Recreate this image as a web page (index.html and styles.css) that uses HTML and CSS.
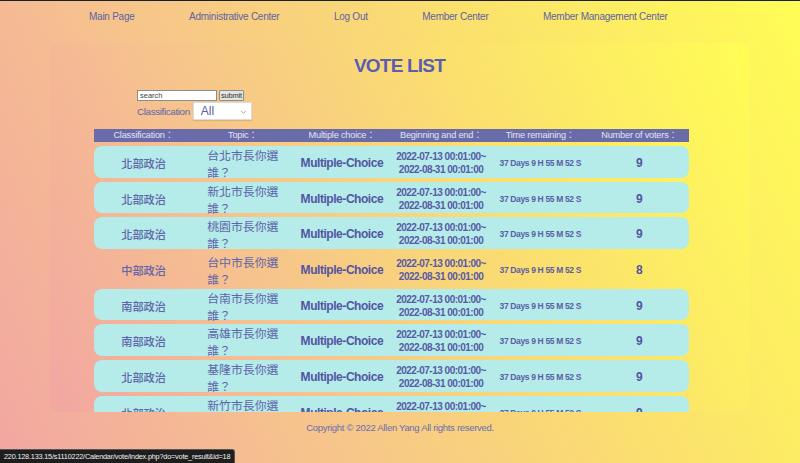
FILE: index.html
```html
<!DOCTYPE html>
<html lang="zh-Hant">
<head>
<meta charset="utf-8">
<title>VOTE LIST</title>
<link rel="stylesheet" href="styles.css">
</head>
<body>
<nav class="nav">
  <a href="#">Main Page</a>
  <a href="#">Administrative Center</a>
  <a href="#">Log Out</a>
  <a href="#">Member Center</a>
  <a href="#">Member Management Center</a>
</nav>
<main class="panel">
  <h1 class="title">VOTE LIST</h1>
  <form class="filters">
    <div class="search-row">
      <input class="search" type="text" value="search">
      <button class="submit" type="button">submit</button>
    </div>
    <div class="class-row">
      <span class="class-label">Classification</span>
      <div class="select">All
        <svg class="chev" viewBox="0 0 10 6" width="7" height="4"><path d="M1 1l4 4 4-4" fill="none" stroke="#9a9a9a" stroke-width="1.2"/></svg>
      </div>
    </div>
  </form>
  <div class="table">
    <div class="thead">
      <span>Classification：</span>
      <span>Topic：</span>
      <span>Multiple choice：</span>
      <span>Beginning and end：</span>
      <span>Time remaining：</span>
      <span>Number of voters：</span>
    </div>
    <div class="rows">
      <div class="row"><span class="c-class">北部政治</span><span class="c-topic">台北市長你選誰？</span><span class="c-multi">Multiple-Choice</span><span class="c-date">2022-07-13 00:01:00~<br>2022-08-31 00:01:00</span><span class="c-time">37 Days 9 H 55 M 52 S</span><span class="c-num">9</span></div>
      <div class="row"><span class="c-class">北部政治</span><span class="c-topic">新北市長你選誰？</span><span class="c-multi">Multiple-Choice</span><span class="c-date">2022-07-13 00:01:00~<br>2022-08-31 00:01:00</span><span class="c-time">37 Days 9 H 55 M 52 S</span><span class="c-num">9</span></div>
      <div class="row"><span class="c-class">北部政治</span><span class="c-topic">桃園市長你選誰？</span><span class="c-multi">Multiple-Choice</span><span class="c-date">2022-07-13 00:01:00~<br>2022-08-31 00:01:00</span><span class="c-time">37 Days 9 H 55 M 52 S</span><span class="c-num">9</span></div>
      <div class="row row-hover"><span class="c-class">中部政治</span><span class="c-topic">台中市長你選誰？</span><span class="c-multi">Multiple-Choice</span><span class="c-date">2022-07-13 00:01:00~<br>2022-08-31 00:01:00</span><span class="c-time">37 Days 9 H 55 M 52 S</span><span class="c-num">8</span></div>
      <div class="row"><span class="c-class">南部政治</span><span class="c-topic">台南市長你選誰？</span><span class="c-multi">Multiple-Choice</span><span class="c-date">2022-07-13 00:01:00~<br>2022-08-31 00:01:00</span><span class="c-time">37 Days 9 H 55 M 52 S</span><span class="c-num">9</span></div>
      <div class="row"><span class="c-class">南部政治</span><span class="c-topic">高雄市長你選誰？</span><span class="c-multi">Multiple-Choice</span><span class="c-date">2022-07-13 00:01:00~<br>2022-08-31 00:01:00</span><span class="c-time">37 Days 9 H 55 M 52 S</span><span class="c-num">9</span></div>
      <div class="row"><span class="c-class">北部政治</span><span class="c-topic">基隆市長你選誰？</span><span class="c-multi">Multiple-Choice</span><span class="c-date">2022-07-13 00:01:00~<br>2022-08-31 00:01:00</span><span class="c-time">37 Days 9 H 55 M 52 S</span><span class="c-num">9</span></div>
      <div class="row"><span class="c-class">北部政治</span><span class="c-topic">新竹市長你選誰？</span><span class="c-multi">Multiple-Choice</span><span class="c-date">2022-07-13 00:01:00~<br>2022-08-31 00:01:00</span><span class="c-time">37 Days 9 H 55 M 52 S</span><span class="c-num">9</span></div>
    </div>
  </div>
</main>
<footer class="footer">Copyright © 2022 Allen Yang All rights reserved.</footer>
<div class="status">220.128.133.15/s1110222/Calendar/vote/index.php?do=vote_result&amp;id=18</div>
</body>
</html>
```
FILE: styles.css
```css
html, body {
  margin: 0;
  padding: 0;
  height: 100%;
}
body {
  border-top: 1px solid #17202c;
  box-sizing: border-box;
  font-family: "Liberation Sans", "Noto Sans CJK TC", sans-serif;
  color: #5a5ca8;
  background: linear-gradient(65deg, #f2a6a2 0%, #f6c28e 30%, #fbe06e 65%, #fffd55 100%);
  overflow: hidden;
}
.nav {
  display: flex;
  gap: 54.5px;
  padding-left: 89px;
  height: 30px;
  align-items: center;
}
.nav a {
  color: #5f62a2;
  text-decoration: none;
  font-size: 10px;
  letter-spacing: -0.25px;
  white-space: nowrap;
}
.panel {
  margin: 12px 0 0 50px;
  width: 699px;
  height: 369px;
  border-radius: 10px;
  overflow: hidden;
  box-sizing: border-box;
  padding-top: 11px;
  background: linear-gradient(65deg, #f2a6a2 0%, #f6c28e 30%, #fbe06e 65%, #fffd55 100%);
}
.title {
  margin: 0;
  text-align: center;
  font-size: 19px;
  letter-spacing: -0.8px;
  line-height: 24px;
  font-weight: bold;
  color: #5a5eb0;
}
.filters {
  margin: 12px 0 0 87px;
  display: flex;
  flex-direction: column;
}
.search-row {
  display: flex;
  gap: 2px;
  height: 12px;
  align-items: flex-start;
}
.search {
  width: 80px;
  height: 11px;
  box-sizing: border-box;
  border: 1px solid #8d8d8d;
  padding: 0 2px;
  font: 7.5px "Liberation Sans", sans-serif;
  color: #444;
  background: #fff;
  outline: none;
}
.submit {
  height: 11px;
  box-sizing: border-box;
  border: 1px solid #8d8d8d;
  border-radius: 1px;
  background: #e4e4e4;
  padding: 0 1px;
  font: 7.5px "Liberation Sans", sans-serif;
  letter-spacing: -0.2px;
  color: #333;
  line-height: 8px;
}
.class-row {
  display: flex;
  align-items: center;
  gap: 3px;
}
.class-label {
  font-size: 9.8px;
  letter-spacing: -0.35px;
  color: #6064aa;
  white-space: nowrap;
}
.select {
  width: 59px;
  height: 18px;
  box-sizing: border-box;
  background: #fff;
  border: 1px solid #dcdcdc;
  border-radius: 1px;
  font-size: 12px;
  color: #5a5ca8;
  padding-left: 7px;
  display: flex;
  align-items: center;
  position: relative;
  box-shadow: 0 1px 1px rgba(0,0,0,0.12);
}
.chev {
  position: absolute;
  right: 4px;
  top: 7px;
}
.table {
  margin: 9px 0 0 44px;
  width: 595px;
}
.thead {
  display: grid;
  grid-template-columns: repeat(6, 1fr);
  height: 13px;
  background: #6a6caa;
  align-items: center;
}
.thead span {
  text-align: center;
  font-size: 9.2px;
  letter-spacing: -0.2px;
  color: #e2e3f2;
  line-height: 13px;
  white-space: nowrap;
}
.rows {
  display: flex;
  flex-direction: column;
  gap: 4px;
  margin-top: 4px;
}
.row {
  display: grid;
  grid-template-columns: repeat(6, 1fr);
  height: 31.7px;
  flex-shrink: 0;
  background: #b5ebe8;
  border-radius: 8px;
  align-items: center;
}
.row-hover {
  background: transparent;
}
.row > span {
  text-align: center;
  white-space: nowrap;
}
.c-class {
  font-family: "Noto Sans CJK TC", sans-serif;
  font-size: 11.2px;
  font-weight: 500;
  color: #6064aa;
}
.row > .c-topic {
  font-family: "Noto Sans CJK TC", sans-serif;
  font-size: 11.9px;
  line-height: 17px;
  color: #6064aa;
  text-align: left;
  white-space: normal;
  padding: 0 8px 0 14px;
}
.c-multi {
  font-size: 12px;
  letter-spacing: -0.45px;
  font-weight: bold;
  color: #5255a3;
}
.c-date {
  font-size: 10px;
  letter-spacing: -0.5px;
  line-height: 13px;
  font-weight: bold;
  color: #5659a6;
}
.c-time {
  font-size: 8.5px;
  letter-spacing: -0.35px;
  font-weight: bold;
  color: #5a5da8;
}
.c-num {
  font-size: 12px;
  font-weight: bold;
  color: #5255a3;
}
.footer {
  text-align: center;
  font-size: 9.5px;
  letter-spacing: -0.3px;
  color: #6a6cb0;
  margin-top: 10px;
}
.status {
  position: fixed;
  left: 0;
  bottom: 0;
  height: 13px;
  padding: 0 4px;
  background: #1e1e1e;
  border: 1px solid #555;
  border-left: 0;
  border-bottom: 0;
  border-radius: 0 3px 0 0;
  color: #f0f0f0;
  font: 7.3px/13px "Liberation Sans", sans-serif;
  letter-spacing: -0.2px;
}
```
